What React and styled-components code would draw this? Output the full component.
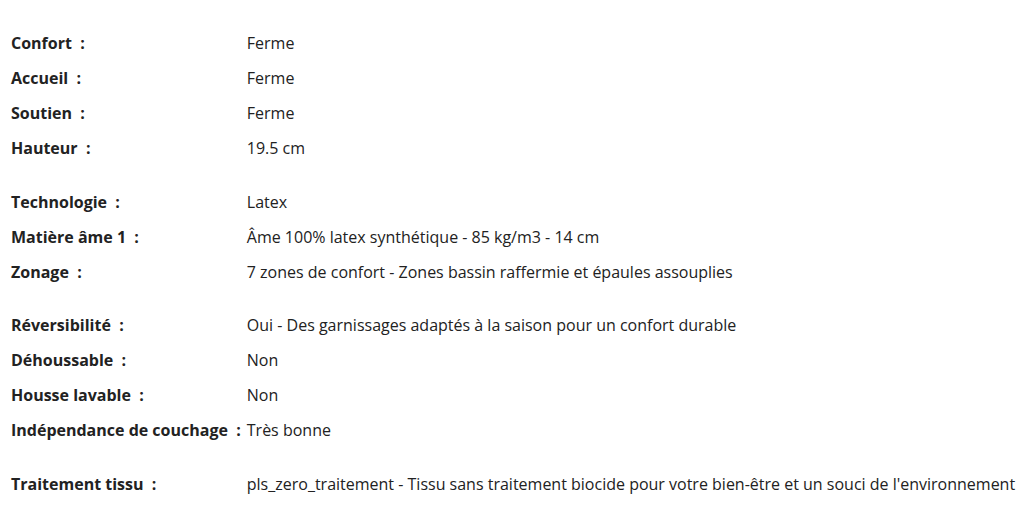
import styled, { createGlobalStyle } from 'styled-components'

const GlobalStyle = createGlobalStyle`
  body {
    margin: 8px;
    background: #fff;
    font-family: 'Open Sans', 'Liberation Sans', sans-serif;
  }
`

const Specs = styled.table`
  border-collapse: collapse;
  margin-top: 18px;
  font-size: 16px;
  line-height: 21px;
  color: #222;
  white-space: nowrap;
`

// $gap = extra space above the first row of a group
const Row = styled.tr`
  td {
    padding-top: ${p => 7 + (p.$gap || 0)}px;
  }
`

const Label = styled.td`
  font-weight: 700;
  padding: 7px 2px 7px 3px;
  vertical-align: top;
`

const Value = styled.td`
  padding: 7px 3px 7px 4px;
  vertical-align: top;
`

const rows = [
  ['Confort', 'Ferme'],
  ['Accueil', 'Ferme'],
  ['Soutien', 'Ferme'],
  ['Hauteur', '19.5 cm'],
  ['Technologie', 'Latex', 19],
  ['Matière âme 1', 'Âme 100% latex synthétique - 85 kg/m3 - 14 cm'],
  ['Zonage', '7 zones de confort - Zones bassin raffermie et épaules assouplies'],
  ['Réversibilité', 'Oui - Des garnissages adaptés à la saison pour un confort durable', 18],
  ['Déhoussable', 'Non'],
  ['Housse lavable', 'Non'],
  ['Indépendance de couchage', 'Très bonne'],
  ['Traitement tissu', "pls_zero_traitement - Tissu sans traitement biocide pour votre bien-être et un souci de l'environnement", 19],
]

export default function App() {
  return (
    <>
      <GlobalStyle />
      <Specs>
        <tbody>
          {rows.map(([label, value, gap]) => (
            <Row key={label} $gap={gap}>
              <Label>{label}{'\u00a0\u00a0:'}</Label>
              <Value>{value}</Value>
            </Row>
          ))}
        </tbody>
      </Specs>
    </>
  )
}
